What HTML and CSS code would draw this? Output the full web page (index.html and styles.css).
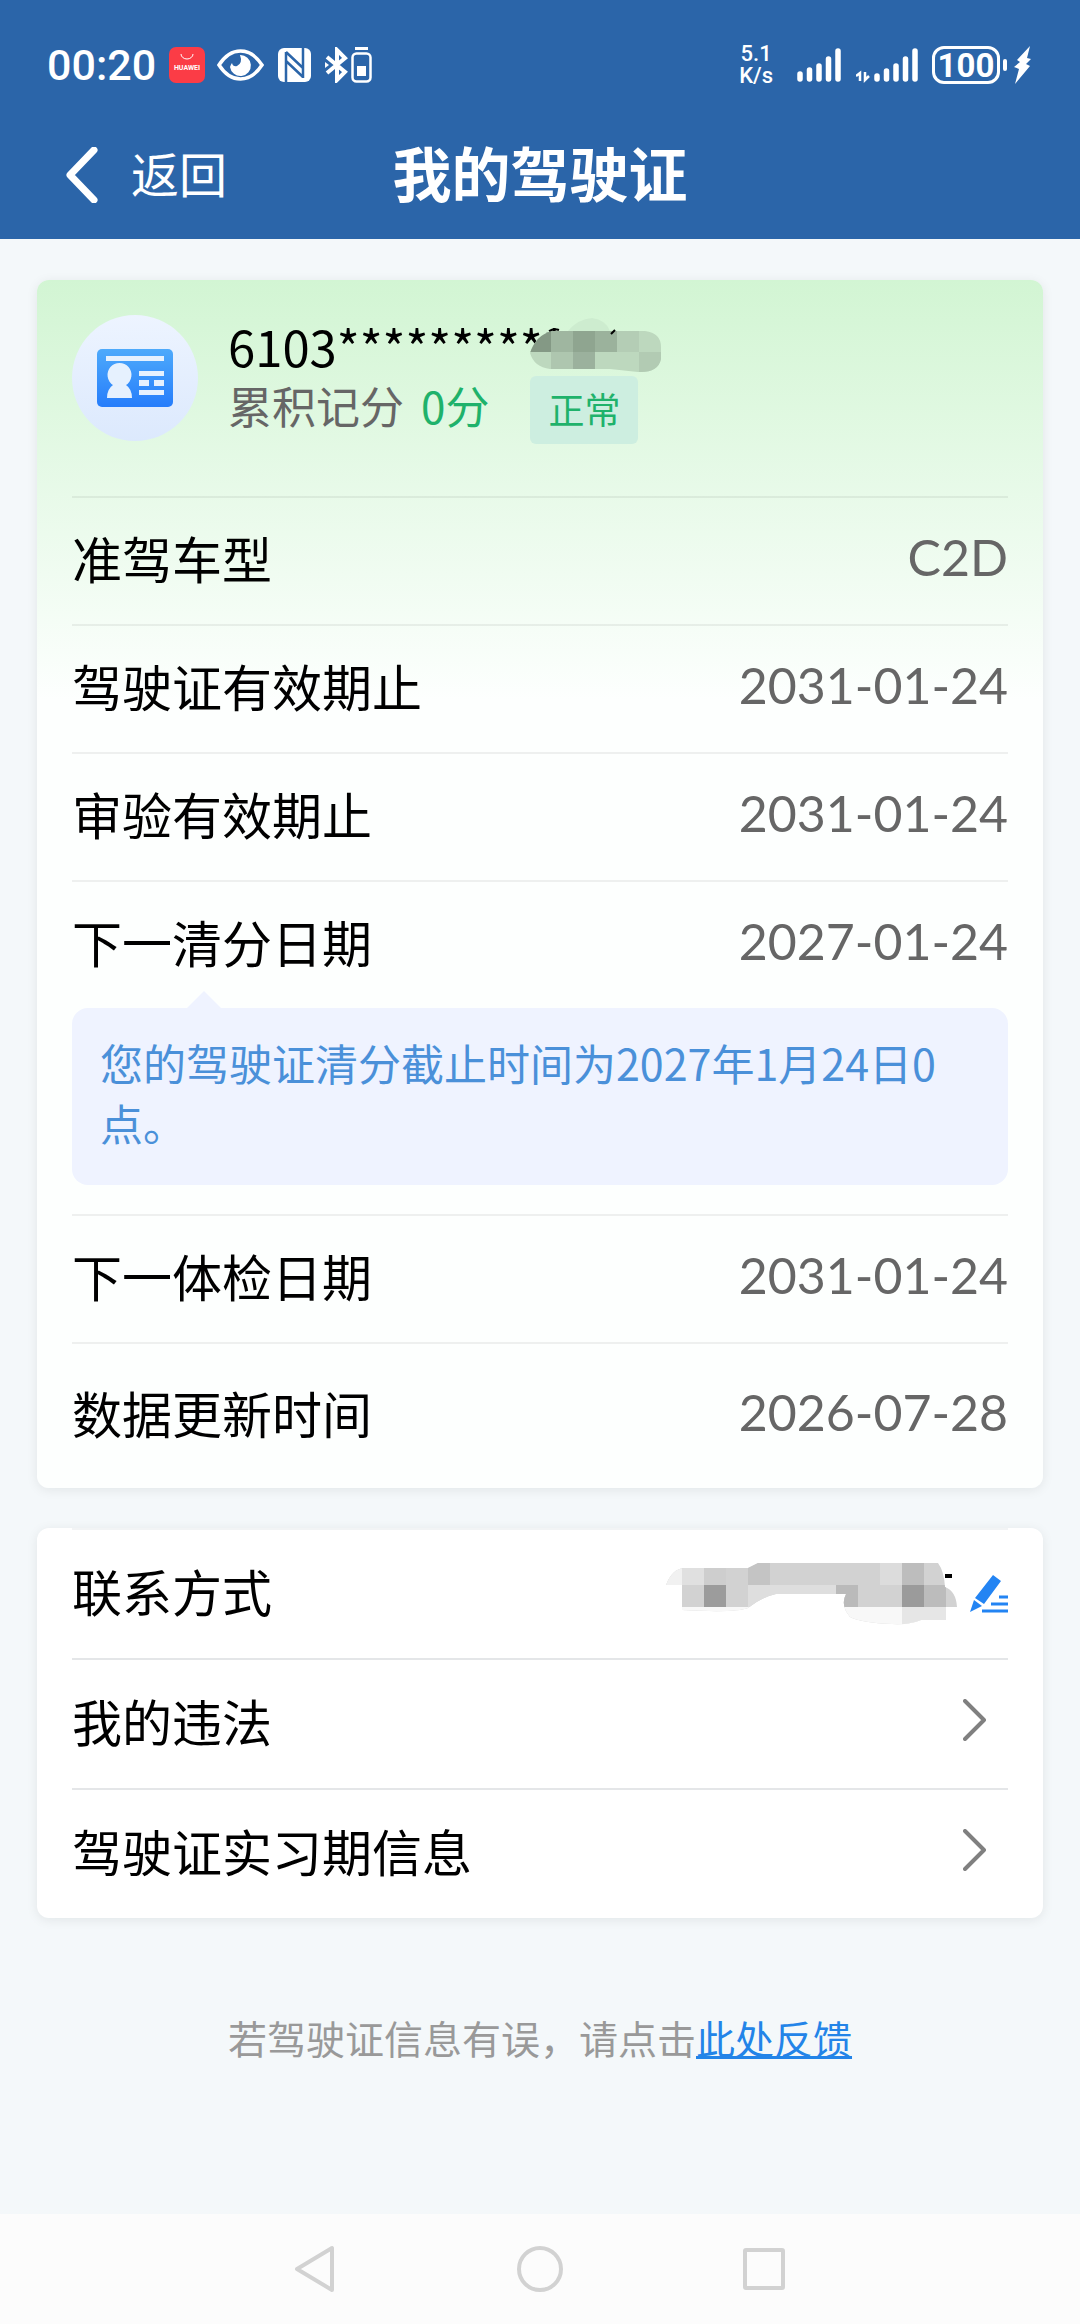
FILE: index.html
```html
<!DOCTYPE html>
<html lang="zh-CN">
  <head>
    <meta charset="utf-8">
    <title>我的驾驶证</title>
    <meta name="viewport" content="width=device-width">
    <link rel="stylesheet" href="styles.css">
  </head>
  <body>
    <header>
      <div class="status">
        <span class="clock">00:20</span>
        <svg class="app" width="36" height="36" viewBox="0 0 36 36">
          <rect width="36" height="36" rx="7" fill="#fb3c46"/>
          <path d="M12 7a6 5 0 0 0 12 0" fill="none" stroke="#fff"/>
          <text x="18" y="23" text-anchor="middle">HUAWEI</text>
        </svg>
        <svg class="eye" width="47" height="32" viewBox="0 0 47 32">
          <path d="M2 16Q11 2 23.500 2T45 16Q36 30 23.500 30T2 16z" fill="none" stroke="#fff" stroke-width="3.500"/>
          <path d="M23 6a10.500 10.500 0 1 1-10 12q1-3 2-4q1 4 5 3q6-3 3-11z" fill="#fff"/>
        </svg>
        <svg class="nfc" width="33" height="34" viewBox="0 0 33 34">
          <rect width="33" height="34" rx="6" fill="#fff"/>
          <path d="M8 4v30M8 4l17 16M8 13l17 16M25 0v30" fill="none" stroke="#2b65a9" stroke-width="2.500"/>
        </svg>
        <svg class="bt" width="48" height="36" viewBox="0 0 48 36">
          <path d="M2 10l18 15-8 8V3l8 8L2 26" fill="none" stroke="#fff" stroke-width="4"/>
          <path d="M0 15l4 3-4 3z" fill="#fff"/>
          <rect x="27.500" y="6.500" width="18" height="28" rx="4" fill="none" stroke="#fff" stroke-width="2.500"/>
          <path d="M30 1.500h13" stroke="#fff" stroke-width="3"/>
          <path d="M32 19h9v10h-9z" fill="#fff"/>
        </svg>
        <div class="speed">
          <div>5.1</div>
          <div>K/s</div>
        </div>
        <svg class="signal" width="44" height="36" viewBox="0 0 44 36">
          <path d="M3 27v5M12.500 23v9M22 19v13M31.500 12v20M41 4v28" stroke="#fff" stroke-width="5.500" stroke-linecap="round"/>
        </svg>
        <svg class="signal2" width="62" height="36" viewBox="0 0 62 36">
          <path d="M0 29l4-3v8M9 25v8l4-4" fill="none" stroke="#fff" stroke-width="2.500"/>
          <path d="M21 29v3M30.500 24v8M40 19v13M49.500 12v20M59 4v28" stroke="#fff" stroke-width="5.500" stroke-linecap="round"/>
        </svg>
        <span class="battery">100</span>
        <svg class="bolt" width="18" height="38" viewBox="0 0 18 38">
          <path d="M16 0L3 14l3 2-6 5 5 2-4 15 15-18-4-2 5-5-4-1z" fill="#fff"/>
        </svg>
      </div>
      <div class="titlebar">
        <button class="back" type="button">
          <svg width="32" height="56" viewBox="0 0 32 56"><path d="M28 3L4 28l24 25"/></svg>
          <span>返回</span>
        </button>
        <h1>我的驾驶证</h1>
      </div>
    </header>

    <main>
      <section class="card license">
        <div class="summary">
          <div class="avatar">
            <svg width="76" height="58" viewBox="0 0 76 58">
              <defs>
                <linearGradient id="blue" x2="0" y2="1">
                  <stop offset="0" stop-color="#4eaafb"/>
                  <stop offset="1" stop-color="#267dfb"/>
                </linearGradient>
              </defs>
              <rect width="76" height="58" rx="5" fill="url(#blue)"/>
              <path d="M9 7h58v5H9zM42 22h25v5H42zM42 31h10v6H42zM57 31h10v6H57zM42 41h25v5H42z" fill="#e6f1fe"/>
              <path d="M10 49q0-9 6-13a12 12 0 1 1 13 0q6 4 6 13z" fill="#e6f1fe"/>
            </svg>
          </div>
          <div class="who">
            <div class="idno">6103**********
              <svg class="mosaic" width="132" height="56" viewBox="0 0 132 56">
                <clipPath id="m1"><path d="M0 36Q6 18 22 14H115Q131 16 131 30V42Q128 56 108 55L80 52H20Q4 50 0 36z"/></clipPath>
                <path d="M38 14Q48 2 62 1Q76 3 80 14z" fill="#cdeccf"/>
                <g clip-path="url(#m1)">
                  <path d="M0 13h132v43H0z" fill="#bdd8be"/>
                  <path d="M0 13h21v22H0z" fill="#849985"/>
                  <path d="M21 13h22v22H21z" fill="#9fb6a0"/>
                  <path d="M43 13h22v22H43z" fill="#8fa590"/>
                  <path d="M65 13h22v22H65z" fill="#9bb29c"/>
                  <path d="M87 13h22v22H87z" fill="#b4cdb5"/>
                  <path d="M21 35h22v21H21z" fill="#aec6af"/>
                  <path d="M43 35h22v21H43z" fill="#9bb19d"/>
                  <path d="M109 35h23v21h-23z" fill="#b2cbb3"/>
                </g>
                <path d="M19 14q5-3 10-1M81 17l4-4" stroke="#000" stroke-width="2" fill="none"/>
              </svg>
            </div>
            <div class="score"><span>累积记分</span><b>0分</b><em class="state">正常</em></div>
          </div>
        </div>
        <dl>
          <div class="row"><dt>准驾车型</dt><dd>C2D</dd></div>
          <div class="row"><dt>驾驶证有效期止</dt><dd>2031-01-24</dd></div>
          <div class="row"><dt>审验有效期止</dt><dd>2031-01-24</dd></div>
          <div class="row"><dt>下一清分日期</dt><dd>2027-01-24</dd></div>
        </dl>
        <p class="tip">您的驾驶证清分截止时间为2027年1月24日0点。</p>
        <dl>
          <div class="row"><dt>下一体检日期</dt><dd>2031-01-24</dd></div>
          <div class="row last"><dt>数据更新时间</dt><dd>2026-07-28</dd></div>
        </dl>
      </section>

      <section class="card links">
        <div class="row">
          <span>联系方式</span>
          <span class="contact">
            <svg width="292" height="62" viewBox="0 0 292 62">
              <clipPath id="m2"><path d="M0 22Q6 6 18 5H82L92 0H272Q278 8 279 24Q290 28 291 44H280V57H255Q244 62 226 61Q196 60 184 54Q174 42 180 31H110Q96 34 82 45Q70 50 16 47V22z"/></clipPath>
              <g clip-path="url(#m2)">
                <path d="M0 0h292v62H0z" fill="#d2d2d2"/>
                <path d="M0 0h16v22H0z" fill="#f1f1f1"/>
                <path d="M16 0h22v22H16z" fill="#e0e0e0"/>
                <path d="M38 0h22v22H38z" fill="#cecece"/>
                <path d="M82 0h22v22H82z" fill="#c4c4c4"/>
                <path d="M214 0h22v22h-22z" fill="#dcdcdc"/>
                <path d="M236 0h22v22h-22z" fill="#bdbdbd"/>
                <path d="M38 22h22v22H38z" fill="#9c9c9c"/>
                <path d="M82 22h88v22H82z" fill="#dedede"/>
                <path d="M170 22h22v22h-22z" fill="#bababa"/>
                <path d="M236 22h22v22h-22z" fill="#9b9b9b"/>
                <path d="M258 22h22v22h-22z" fill="#bcbcbc"/>
                <path d="M0 44h292v18H0z" fill="#f8f8f8"/>
                <path d="M236 44h44v18h-44z" fill="#e6e6e6"/>
              </g>
              <path d="M279 11h7v4h-7z"/>
            </svg>
            <button class="edit" type="button" aria-label="编辑">
              <svg width="38" height="38" viewBox="0 0 38 38">
                <path d="M23 0l8 6-17 23-9-6zM4 25l8 6-12 6z" fill="#2384f3"/>
                <path d="M29 22h9M21 29h17M12 36h26" stroke="#2384f3" stroke-width="3"/>
              </svg>
            </button>
          </span>
        </div>
        <a class="row" href="#">我的违法
          <svg class="arrow" width="24" height="42" viewBox="0 0 24 42"><path d="M2 2l19 19L2 40"/></svg>
        </a>
        <a class="row" href="#">驾驶证实习期信息
          <svg class="arrow" width="24" height="42" viewBox="0 0 24 42"><path d="M2 2l19 19L2 40"/></svg>
        </a>
      </section>

      <p class="feedback">若驾驶证信息有误，请点击<a href="#">此处反馈</a></p>
    </main>

    <nav>
      <button type="button" aria-label="返回"><svg width="46" height="48" viewBox="0 0 46 48"><path d="M39 3v42L4 24z"/></svg></button>
      <button type="button" aria-label="主页"><svg width="46" height="48" viewBox="0 0 46 48"><circle cx="23" cy="24" r="21"/></svg></button>
      <button type="button" aria-label="最近"><svg width="46" height="48" viewBox="0 0 46 48"><rect x="4" y="5" width="38" height="38" rx="1"/></svg></button>
    </nav>
  </body>
</html>
```

FILE: styles.css
```css
* {
    box-sizing: border-box;
}
body {
    display: flex;
    flex-direction: column;
    min-height: 100vh;
    margin: 0;
    background: #f4f8fa;
    color: #000;
    font-family: "Noto Sans CJK SC", sans-serif;
    font-size: 50px;
    line-height: 60px;
}
h1, p, dl, dd {
    margin: 0;
}
svg {
    display: block;
    flex: none;
}
button {
    padding: 0;
    border: 0;
    background: none;
    color: inherit;
    font: inherit;
}

header {
    background: #2b65a9;
    color: #fff;
}
.status {
    display: flex;
    align-items: center;
    height: 130px;
    padding: 0 48px 0 47px;
}
.clock {
    font-family: Roboto, sans-serif;
    font-size: 43px;
    font-weight: 500;
}
.app {
    margin-left: 13px;
}
.app text {
    fill: #fff;
    font-family: Roboto, sans-serif;
    font-size: 7px;
    font-weight: 700;
}
.eye {
    margin-left: 12px;
}
.nfc {
    margin-left: 14px;
}
.bt {
    margin-left: 14px;
}
.speed {
    margin-left: auto;
    font-family: Roboto, sans-serif;
    font-size: 22px;
    font-weight: 500;
    line-height: 22px;
    text-align: center;
}
.signal {
    margin-left: 24px;
}
.signal2 {
    margin-left: 15px;
}
.battery {
    position: relative;
    width: 68px;
    height: 38px;
    margin-left: 14px;
    border: 3px solid #fff;
    border-radius: 12px;
    font-family: Roboto, sans-serif;
    font-size: 33px;
    font-weight: 700;
    line-height: 33px;
    text-align: center;
}
.battery::after {
    content: "";
    position: absolute;
    top: 10px;
    right: -10px;
    width: 4px;
    height: 12px;
    border-radius: 2px;
    background: #fff;
}
.bolt {
    margin-left: 14px;
}
.titlebar {
    display: grid;
    grid-template-columns: 1fr auto 1fr;
    align-items: center;
    height: 109px;
    padding: 0 66px 19px;
}
.back {
    display: flex;
    align-items: center;
    gap: 33px;
    font-size: 48px;
}
.back span, h1 {
    padding-bottom: 7px;
}
.back path {
    fill: none;
    stroke: #fff;
    stroke-width: 7;
    stroke-linecap: round;
    stroke-linejoin: round;
}
h1 {
    font-size: 59px;
    font-weight: 700;
}

main {
    flex: 1;
    padding: 41px 37px 0;
}
.card {
    margin-bottom: 40px;
    padding: 0 35px;
    border-radius: 12px;
    background: #fff;
    box-shadow: 0 2px 12px rgba(0, 20, 20, .08);
}
.license {
    background: linear-gradient(#d2f5d3, #fdfffe 420px);
}
.summary {
    display: flex;
    gap: 30px;
    height: 216px;
    padding-top: 35px;
}
.avatar {
    display: flex;
    align-items: center;
    justify-content: center;
    width: 126px;
    height: 126px;
    border-radius: 50%;
    background: linear-gradient(#edf4ff, #dce9fd);
}
.idno {
    position: relative;
    height: 60px;
    font-size: 49px;
    line-height: 62px;
}
.mosaic {
    position: absolute;
    top: 2px;
    left: 302px;
}
.score {
    display: flex;
    align-items: center;
    height: 70px;
    color: #666;
    font-size: 44px;
}
.score span, .score b {
    padding-bottom: 10px;
}
.score b {
    margin-left: 17px;
    color: #1fb26b;
    font-weight: 400;
}
.state {
    margin-left: 41px;
    padding: 2px 18px 6px;
    border-radius: 6px;
    background: #cdeee0;
    color: #1fb26b;
    font-size: 36px;
    font-style: normal;
}
.row {
    display: flex;
    align-items: center;
    justify-content: space-between;
    height: 128px;
    padding-bottom: 8px;
    border-top: 2px solid rgba(0, 0, 0, .06);
    color: #000;
    text-decoration: none;
}
.row dd {
    color: #666;
    font-family: Lato, sans-serif;
}
.row.last {
    height: 146px;
}
.tip {
    position: relative;
    margin-bottom: 29px;
    padding: 24px 28px 33px;
    border-radius: 16px;
    background: #eff3ff;
    color: #4a90d9;
    font-size: 43px;
}
.tip::before {
    content: "";
    position: absolute;
    top: -17px;
    left: 115px;
    border: 17px solid transparent;
    border-top: 0;
    border-bottom-color: #eff3ff;
}
.links .row {
    height: 130px;
    border-color: #e4e6e8;
}
.links .row:first-child {
    border-color: #f2f4f5;
}
.contact {
    display: flex;
    align-items: center;
    gap: 12px;
    padding-top: 8px;
}
.edit {
    display: flex;
}
.arrow {
    margin-right: 21px;
}
.arrow path {
    fill: none;
    stroke: #808080;
    stroke-width: 4;
    stroke-linecap: round;
    stroke-linejoin: round;
}
.feedback {
    margin-top: 89px;
    color: #999;
    font-size: 39px;
    text-align: center;
}
.feedback a {
    color: #2384e8;
}

nav {
    display: flex;
    align-items: center;
    justify-content: center;
    gap: 178px;
    height: 110px;
    background: #fcfcfc;
}
nav path, nav circle, nav rect {
    fill: none;
    stroke: #d2d2d2;
    stroke-width: 4;
    stroke-linejoin: round;
}
```
